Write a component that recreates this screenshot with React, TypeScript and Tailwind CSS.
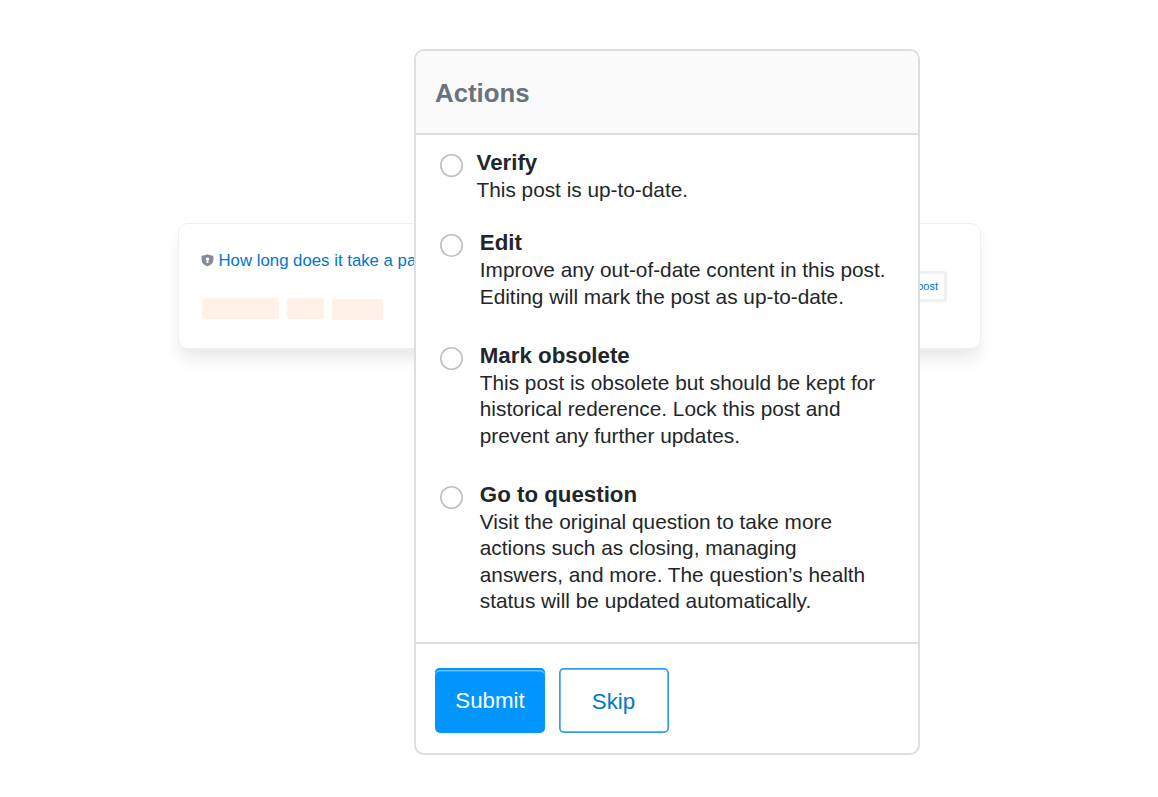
type Option = { title: string; lines: string[]; pad: string; gap: string };

const options: Option[] = [
  { title: 'Verify', lines: ['This post is up-to-date.'], pad: 'pl-[13.5px]', gap: 'mb-[25.5px]' },
  {
    title: 'Edit',
    lines: ['Improve any out-of-date content in this post.', 'Editing will mark the post as up-to-date.'],
    pad: 'pl-[16.8px]',
    gap: 'mb-[31.5px]',
  },
  {
    title: 'Mark obsolete',
    lines: ['This post is obsolete but should be kept for', 'historical rederence. Lock this post and', 'prevent any further updates.'],
    pad: 'pl-[16.8px]',
    gap: 'mb-[31.5px]',
  },
  {
    title: 'Go to question',
    lines: [
      'Visit the original question to take more',
      'actions such as closing, managing',
      'answers, and more. The question’s health',
      'status will be updated automatically.',
    ],
    pad: 'pl-[16.8px]',
    gap: '',
  },
];

function Shield() {
  return (
    <svg className="-ml-[0.5px] mr-[4.5px] mt-[10px] h-[13px] w-[13px] shrink-0" viewBox="0 0 13 13">
      <path d="M6.5 0.3C8.3 1.2 10.3 1.5 12.4 1.7V5.8C12.4 9 10.2 11.2 6.5 12.3C2.8 11.2 0.6 9 0.6 5.8V1.7C2.7 1.5 4.7 1.2 6.5 0.3Z" fill="#848d95" />
      <path d="M6.5 3.4A1.6 1.6 0 0 1 7.4 6.4V8.9H5.6V6.4A1.6 1.6 0 0 1 6.5 3.4Z" fill="#ffffff" />
    </svg>
  );
}

function PostCard() {
  return (
    <section className="ml-[178px] flex h-[126px] w-[803px] justify-between rounded-[10px] border border-[#eff0f1] bg-white pl-[22.5px] pr-[33px] shadow-[0_12px_16px_-2px_rgba(0,0,0,0.09)]">
      <div className="pt-[20px]">
        <div className="flex h-[34px]">
          <Shield />
          <span className="whitespace-nowrap text-[16.8px] leading-[34px] text-[#0077cc]">How long does it take a pa</span>
        </div>
        <div className="mt-[20px] flex gap-[8px]">
          <div className="h-[21px] w-[77px] rounded-[3px] bg-[#fff1e8]" />
          <div className="h-[21px] w-[37.5px] rounded-[3px] bg-[#fff1e8]" />
          <div className="mt-[1px] h-[21px] w-[51px] rounded-[3px] bg-[#fff1e8]" />
        </div>
      </div>
      <button className="mt-[47px] h-[31px] w-[90px] rounded-[3px] border-[3px] border-[#eff0f1] pr-[6px] text-right text-[11px] text-[#0077cc]">
        post
      </button>
    </section>
  );
}

function ActionsPanel() {
  return (
    <section className="absolute left-[414px] top-[49px] flex h-[706px] w-[506px] flex-col overflow-hidden rounded-[10px] border-2 border-[#dcdedf] bg-white">
      <header className="h-[84px] shrink-0 border-b-2 border-[#dcdedf] bg-[#fafafa] pl-[19px] text-[25.8px] font-bold leading-[85px] text-[#6a737c]">
        Actions
      </header>
      <div className="h-[507px] shrink-0 pl-[24px] pt-[14px]">
        {options.map((o) => (
          <label key={o.title} className={`flex ${o.gap}`}>
            <span className="mt-[5px] h-[23px] w-[23px] shrink-0 rounded-full bg-white shadow-[inset_0_0_0_1.6px_#bbc0c4]" />
            <span className={`block ${o.pad}`}>
              <span className="block pb-px text-[22.3px] font-bold leading-[27px] text-[#232629]">{o.title}</span>
              {o.lines.map((line) => (
                <span key={line} className="block whitespace-nowrap text-[20.8px] leading-[26.5px] text-[#232629]">
                  {line}
                </span>
              ))}
            </span>
          </label>
        ))}
      </div>
      <footer className="flex flex-1 gap-[14px] border-t-2 border-[#dcdedf] pl-[19px] pt-[24px] text-[22.3px]">
        <button className="h-[65px] w-[110px] rounded-[5px] bg-[#0095ff] text-white shadow-[inset_0_2px_0_#0095ff,inset_0_3.5px_0_#66bfff]">
          Submit
        </button>
        <button className="h-[65px] w-[110px] rounded-[5px] bg-white pr-[1px] pt-[3px] text-[#0077cc] shadow-[inset_0_0_0_1.7px_#389cec]">Skip</button>
      </footer>
    </section>
  );
}

export default function App() {
  return (
    <main className="relative h-[797px] w-[1158px] overflow-hidden bg-white pt-[223px] font-['Liberation_Sans',Arial,sans-serif]">
      <PostCard />
      <ActionsPanel />
    </main>
  );
}
